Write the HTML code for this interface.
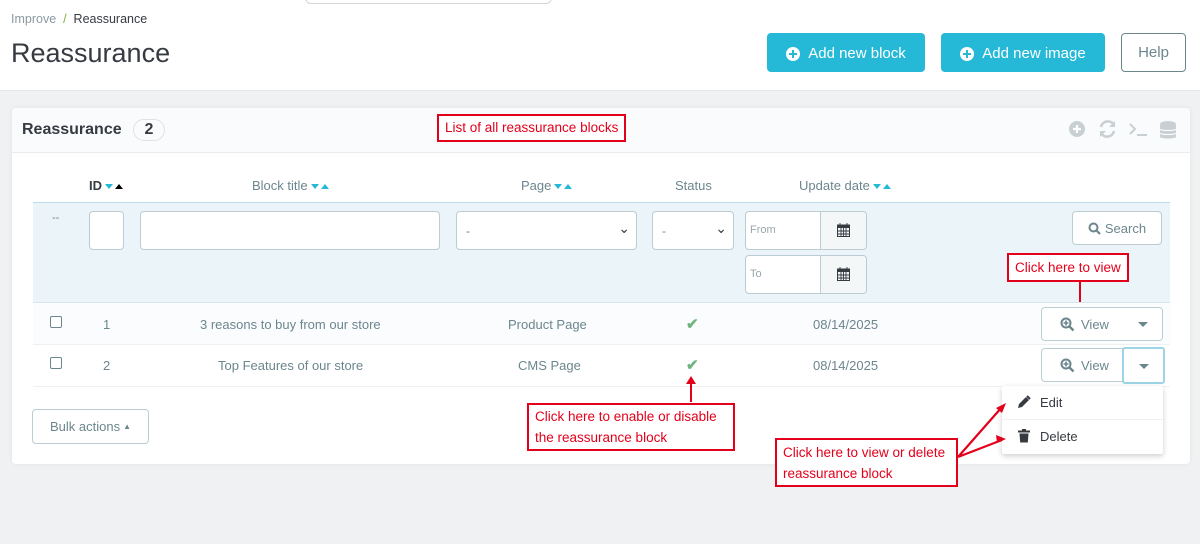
<!DOCTYPE html>
<html><head><meta charset="utf-8"><style>
*{box-sizing:border-box;margin:0;padding:0}
body{width:1200px;height:544px;overflow:hidden;background:#eff1f2;font-family:"Liberation Sans",sans-serif;position:relative;color:#363a41}
.a{position:absolute}
.t{font-size:13px;color:#6c868e}
.btn{position:absolute;background:#25b9d7;color:#fff;border-radius:4px;font-size:15px;display:flex;align-items:center;justify-content:center;gap:8px;padding-top:2px}
.plus{width:14px;height:14px;border-radius:50%;background:#fff;position:relative}
.plus:before,.plus:after{content:"";position:absolute;background:#25b9d7}
.plus:before{left:3px;top:6px;width:8px;height:2px}
.plus:after{left:6px;top:3px;width:2px;height:8px}
.inp{position:absolute;background:#fff;border:1px solid #bbcdd2;border-radius:4px;overflow:hidden}
.red{position:absolute;border:2px solid #e3001b;background:#fff;color:#e3001b;font-size:13.5px;line-height:21px;padding:0 6px}
.dn{display:inline-block;width:0;height:0;border-left:4px solid transparent;border-right:4px solid transparent;border-top:5px solid #25b9d7;vertical-align:middle;margin-left:3px}
.up{display:inline-block;width:0;height:0;border-left:4px solid transparent;border-right:4px solid transparent;border-bottom:5px solid #25b9d7;vertical-align:middle;margin-left:2px}
.cb{position:absolute;width:12px;height:12px;border:1px solid #6c868e;border-radius:2px;background:#fff}
.chk{position:absolute;color:#70b580;font-size:15px;font-weight:bold}
.vb{position:absolute;background:#fff;border:1px solid #bbcdd2;border-radius:4px;font-size:13px;color:#6c868e}
.caret{position:absolute;width:0;height:0;border-left:5px solid transparent;border-right:5px solid transparent;border-top:5px solid #6c868e}
.cal{position:absolute;left:74px;top:0;width:46px;height:37px;background:#f4f7f8;border-left:1px solid #bbcdd2}
</style></head><body>
<div class="a" style="left:0;top:0;width:1200px;height:91px;background:#fff;border-bottom:1px solid #e4e6e8"></div>
<div class="a" style="left:305px;top:-8px;width:247px;height:12px;border:1px solid #d0d6d9;border-radius:8px;background:#fff"></div>
<div class="a" style="left:11px;top:12px;font-size:12.5px;color:#8a9aa0">Improve&nbsp;&nbsp;<span style="color:#7cb342">/</span>&nbsp;&nbsp;<span style="color:#363a41">Reassurance</span></div>
<div class="a" style="left:11px;top:38px;font-size:27px;color:#363a41">Reassurance</div>
<div class="btn" style="left:767px;top:33px;width:158px;height:39px"><span class="plus"></span>Add new block</div>
<div class="btn" style="left:941px;top:33px;width:164px;height:39px"><span class="plus"></span>Add new image</div>
<div class="a" style="left:1121px;top:33px;width:65px;height:39px;border:1px solid #6c868e;border-radius:4px;background:#fff;font-size:15px;color:#6c868e;display:flex;align-items:center;justify-content:center">Help</div>

<div class="a" style="left:12px;top:108px;width:1178px;height:356px;background:#fff;border-radius:4px;box-shadow:0 0 4px rgba(0,0,0,.06)"></div>
<div class="a" style="left:12px;top:108px;width:1178px;height:45px;background:#fafbfc;border-bottom:1px solid #e8ecee;border-radius:4px 4px 0 0"></div>
<div class="a" style="left:22px;top:121px;font-size:16px;font-weight:bold;color:#363a41">Reassurance</div>
<div class="a" style="left:133px;top:119px;width:32px;height:22px;border:1px solid #dde3e5;border-radius:11px;text-align:center;font-size:16px;font-weight:bold;line-height:20px">2</div>
<div class="red" style="left:437px;top:114px;height:28px;line-height:24px;font-size:13.5px">List of all reassurance blocks</div>
<svg class="a" style="left:1066px;top:118px" width="120" height="22" viewBox="0 0 120 22">
<circle cx="11" cy="11" r="8" fill="#c9d0d3"/><path d="M7 11h8M11 7v8" stroke="#fff" stroke-width="2.2"/>
<path d="M35 9a7 7 0 0 1 13-2M48 13a7 7 0 0 1-13 2" stroke="#c9d0d3" stroke-width="2.6" fill="none"/><path d="M49 3v6h-6M34 19v-6h6" fill="#c9d0d3"/>
<path d="M64 6l5 5-5 5" stroke="#c9d0d3" stroke-width="2" fill="none"/><path d="M71 17h10" stroke="#c9d0d3" stroke-width="2"/>
<ellipse cx="102" cy="6" rx="8" ry="3" fill="#c9d0d3"/><path d="M94 7v12c0 2 16 2 16 0V7" fill="#c9d0d3"/><path d="M94 11c0 2 16 2 16 0M94 15c0 2 16 2 16 0" stroke="#fff" fill="none"/>
</svg>

<div class="a t" style="left:89px;top:178px;font-weight:bold;color:#363a41">ID<span class="dn"></span><span class="up" style="border-bottom-color:#000"></span></div>
<div class="a t" style="left:252px;top:178px">Block title<span class="dn"></span><span class="up"></span></div>
<div class="a t" style="left:521px;top:178px">Page<span class="dn"></span><span class="up"></span></div>
<div class="a t" style="left:675px;top:178px">Status</div>
<div class="a t" style="left:799px;top:178px">Update date<span class="dn"></span><span class="up"></span></div>

<div class="a" style="left:33px;top:202px;width:1137px;height:101px;background:#eaf4f9;border-top:1px solid #bbdbe8;border-bottom:1px solid #d4e6ee"></div>
<div class="a" style="left:52px;top:212px;font-size:11px;color:#6c868e">--</div>
<div class="inp" style="left:89px;top:211px;width:35px;height:39px"></div>
<div class="inp" style="left:140px;top:211px;width:300px;height:39px"></div>
<div class="inp" style="left:456px;top:211px;width:181px;height:39px"><span class="a" style="left:9px;top:12px;font-size:12px;color:#6c868e">-</span><span class="a" style="right:6px;top:8px;font-size:14px;color:#363a41">⌄</span></div>
<div class="inp" style="left:652px;top:211px;width:82px;height:39px"><span class="a" style="left:9px;top:12px;font-size:12px;color:#6c868e">-</span><span class="a" style="right:6px;top:8px;font-size:14px;color:#363a41">⌄</span></div>
<div class="inp" style="left:745px;top:211px;width:122px;height:39px"><span class="a" style="left:4px;top:12px;font-size:11px;color:#9aa6aa">From</span><div class="cal"><svg class="a" style="left:16px;top:11px" width="13" height="14" viewBox="0 0 13 14"><rect x="0.5" y="2" width="12" height="11.5" fill="none" stroke="#363a41"/><rect x="0.5" y="2" width="12" height="3" fill="#363a41"/><path d="M3 0v3M10 0v3M0 8h13M0 11h13M4 5v9M6.5 5v9M9 5v9" stroke="#363a41" stroke-width="0.9"/></svg></div></div>
<div class="inp" style="left:745px;top:255px;width:122px;height:39px"><span class="a" style="left:4px;top:12px;font-size:11px;color:#9aa6aa">To</span><div class="cal"><svg class="a" style="left:16px;top:11px" width="13" height="14" viewBox="0 0 13 14"><rect x="0.5" y="2" width="12" height="11.5" fill="none" stroke="#363a41"/><rect x="0.5" y="2" width="12" height="3" fill="#363a41"/><path d="M3 0v3M10 0v3M0 8h13M0 11h13M4 5v9M6.5 5v9M9 5v9" stroke="#363a41" stroke-width="0.9"/></svg></div></div>
<div class="a" style="left:1072px;top:211px;width:90px;height:34px;background:#fff;border:1px solid #bbcdd2;border-radius:4px;font-size:13px;color:#6c868e;display:flex;align-items:center;justify-content:center;gap:4px"><svg width="13" height="13" viewBox="0 0 13 13"><circle cx="5.5" cy="5.5" r="4" stroke="#6c868e" stroke-width="2" fill="none"/><path d="M8.5 8.5l3.5 3.5" stroke="#6c868e" stroke-width="2.2"/></svg>Search</div>
<div class="red" style="left:1007px;top:253px;height:29px;line-height:25px">Click here to view</div>
<div class="a" style="left:1079px;top:282px;width:2px;height:20px;background:#e3001b"></div>

<div class="a" style="left:33px;top:304px;width:1137px;height:41px;background:#fafcfd;border-bottom:1px solid #eef1f2"></div>
<div class="a" style="left:33px;top:346px;width:1137px;height:41px;border-bottom:1px solid #eef1f2"></div>
<div class="cb" style="left:50px;top:316px"></div>
<div class="cb" style="left:50px;top:357px"></div>
<div class="a t" style="left:103px;top:317px">1</div>
<div class="a t" style="left:103px;top:358px">2</div>
<div class="a t" style="left:200px;top:317px">3 reasons to buy from our store</div>
<div class="a t" style="left:218px;top:358px">Top Features of our store</div>
<div class="a t" style="left:508px;top:317px">Product Page</div>
<div class="a t" style="left:518px;top:358px">CMS Page</div>
<div class="chk" style="left:686px;top:315px">✔</div>
<div class="chk" style="left:686px;top:356px">✔</div>
<div class="a t" style="left:813px;top:317px">08/14/2025</div>
<div class="a t" style="left:813px;top:358px">08/14/2025</div>

<div class="vb" style="left:1041px;top:307px;width:122px;height:34px"><svg class="a" style="left:18px;top:9px" width="15" height="15" viewBox="0 0 15 15"><circle cx="6" cy="6" r="4.5" stroke="#6c868e" stroke-width="2" fill="none"/><path d="M6 3.5v5M3.5 6h5" stroke="#6c868e" stroke-width="1.6"/><path d="M9.5 9.5l4 4" stroke="#6c868e" stroke-width="2.4"/></svg><span class="a" style="left:39px;top:9px">View</span><span class="caret" style="left:96px;top:14px"></span></div>
<div class="vb" style="left:1041px;top:348px;width:122px;height:34px"><svg class="a" style="left:18px;top:9px" width="15" height="15" viewBox="0 0 15 15"><circle cx="6" cy="6" r="4.5" stroke="#6c868e" stroke-width="2" fill="none"/><path d="M6 3.5v5M3.5 6h5" stroke="#6c868e" stroke-width="1.6"/><path d="M9.5 9.5l4 4" stroke="#6c868e" stroke-width="2.4"/></svg><span class="a" style="left:39px;top:9px">View</span></div>
<div class="a" style="left:1122px;top:347px;width:43px;height:37px;border:2px solid #9dd4e6;border-radius:3px;background:#fff"><span class="caret" style="left:15px;top:15px"></span></div>

<div class="a" style="left:1002px;top:386px;width:161px;height:68px;background:#fff;box-shadow:0 2px 6px rgba(0,0,0,.2);border-radius:2px"></div>
<div class="a" style="left:1002px;top:419px;width:161px;height:1px;background:#eef1f2"></div>
<svg class="a" style="left:1017px;top:395px" width="14" height="14" viewBox="0 0 14 14"><path d="M1 13l1-4 7-7 3 3-7 7z" fill="#363a41"/><path d="M10 1l3 3" stroke="#363a41" stroke-width="2"/></svg>
<div class="a t" style="left:1040px;top:395px;color:#363a41">Edit</div>
<svg class="a" style="left:1018px;top:429px" width="12" height="14" viewBox="0 0 12 14"><rect x="0" y="1.5" width="12" height="2" fill="#363a41"/><rect x="4" y="0" width="4" height="2" fill="#363a41"/><path d="M1.5 4.5h9l-.7 9H2.2z" fill="#363a41"/></svg>
<div class="a t" style="left:1040px;top:429px;color:#363a41">Delete</div>

<div class="a" style="left:32px;top:409px;width:117px;height:35px;border:1px solid #bbcdd2;border-radius:4px;background:#fff;font-size:13px;color:#6c868e;display:flex;align-items:center;justify-content:center">Bulk actions<span style="font-size:8px;margin-left:3px">▲</span></div>

<div class="a" style="left:690px;top:380px;width:2px;height:22px;background:#e3001b"></div>
<div class="a" style="left:686px;top:376px;width:0;height:0;border-left:5px solid transparent;border-right:5px solid transparent;border-bottom:8px solid #e3001b"></div>
<div class="red" style="left:527px;top:403px;width:208px;height:48px;padding-top:1px">Click here to enable or disable<br>the reassurance block</div>
<div class="red" style="left:775px;top:438px;width:183px;height:49px;padding-top:2px">Click here to view or delete<br>reassurance block</div>
<svg class="a" style="left:950px;top:395px" width="60" height="70" viewBox="0 0 60 70"><path d="M8 62L52 12M8 62L52 45" stroke="#e3001b" stroke-width="2.2"/><path d="M56 8l-10 5 6 5z" fill="#e3001b"/><path d="M56 44l-10-4 1 8z" fill="#e3001b"/></svg>
</body></html>
